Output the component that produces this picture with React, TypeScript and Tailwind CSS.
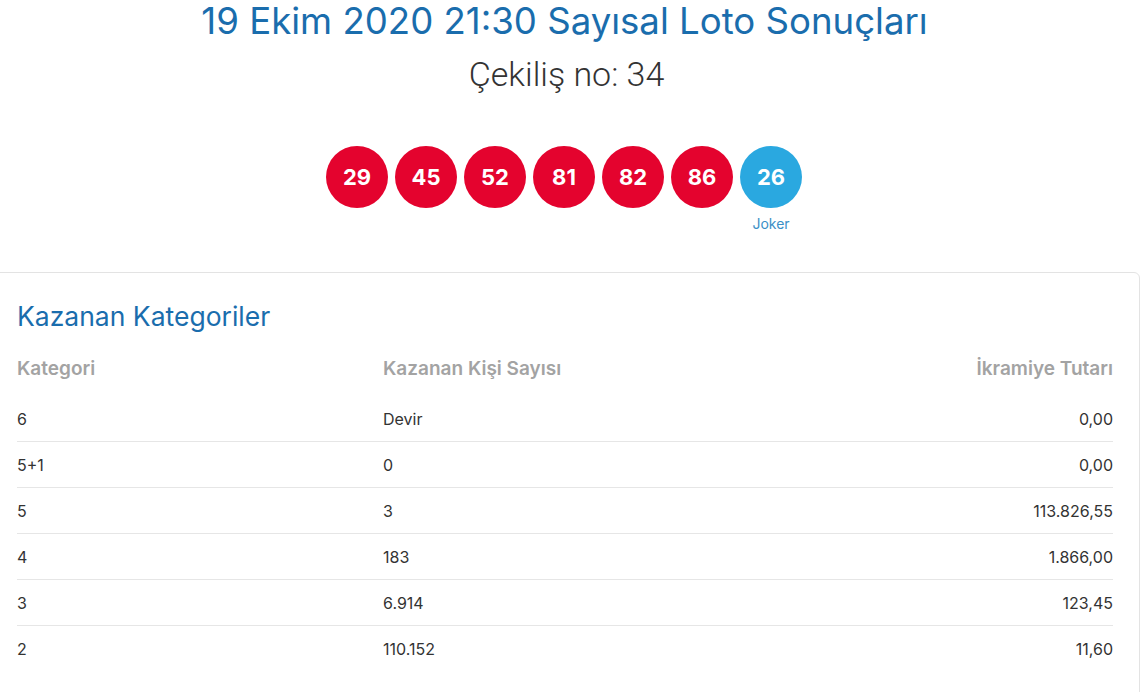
const balls = ["29", "45", "52", "81", "82", "86"];

const rows = [
  { cat: "6", count: "Devir", amount: "0,00" },
  { cat: "5+1", count: "0", amount: "0,00" },
  { cat: "5", count: "3", amount: "113.826,55" },
  { cat: "4", count: "183", amount: "1.866,00" },
  { cat: "3", count: "6.914", amount: "123,45" },
  { cat: "2", count: "110.152", amount: "11,60" },
];

export default function App() {
  return (
    <div className="w-[1144px] h-[692px] overflow-hidden bg-white font-['Inter',sans-serif]">
      {/* Header */}
      <div className="flex flex-col items-center">
        <h1 className="text-[36.6px] leading-[42px] text-[#1a6dad] ml-[-15px]">
          19 Ekim 2020 21:30 Sayısal Loto Sonuçları
        </h1>
        <p className="mt-[14px] text-[34px] leading-[36px] text-[#333] font-['Roboto',sans-serif] font-light ml-[-11px]">
          Çekiliş no: 34
        </p>

        {/* Balls */}
        <div className="mt-[54px] flex gap-[7px] ml-[-16px]">
          {balls.map((b) => (
            <div
              key={b}
              className="w-[62px] h-[62px] rounded-full bg-[#e4032e] flex items-center justify-center text-white text-[22px] font-bold"
            >
              {b}
            </div>
          ))}
          <div className="flex flex-col items-center">
            <div className="w-[62px] h-[62px] rounded-full bg-[#2aa8e0] flex items-center justify-center text-white text-[22px] font-bold">
              26
            </div>
            <span className="mt-[7px] text-[14px] leading-[18px] text-[#3b8fc6]">Joker</span>
          </div>
        </div>
      </div>

      {/* Winners card */}
      <div className="mt-[39px] ml-[-1px] w-[1141px] border border-[#e3e3e3] rounded-tr-[6px] pl-[17px] pr-[26px] pt-[26px] pb-[40px]">
        <h2 className="text-[26.5px] leading-[34px] text-[#1a6dad]">Kazanan Kategoriler</h2>
        <div className="mt-[20px] grid grid-cols-[366px_1fr_auto] text-[19px] font-semibold text-[#a3a3a3] h-[32px] items-center">
          <span>Kategori</span>
          <span>Kazanan Kişi Sayısı</span>
          <span>İkramiye Tutarı</span>
        </div>
        <div className="mt-[11px]">
          {rows.map((r, i) => (
            <div
              key={r.cat}
              className={
                "grid grid-cols-[366px_1fr_auto] h-[46px] items-center text-[16px] text-[#333] " +
                (i < rows.length - 1 ? "border-b border-[#e6e6e6]" : "")
              }
            >
              <span>{r.cat}</span>
              <span>{r.count}</span>
              <span className="text-right">{r.amount}</span>
            </div>
          ))}
        </div>
      </div>
    </div>
  );
}
